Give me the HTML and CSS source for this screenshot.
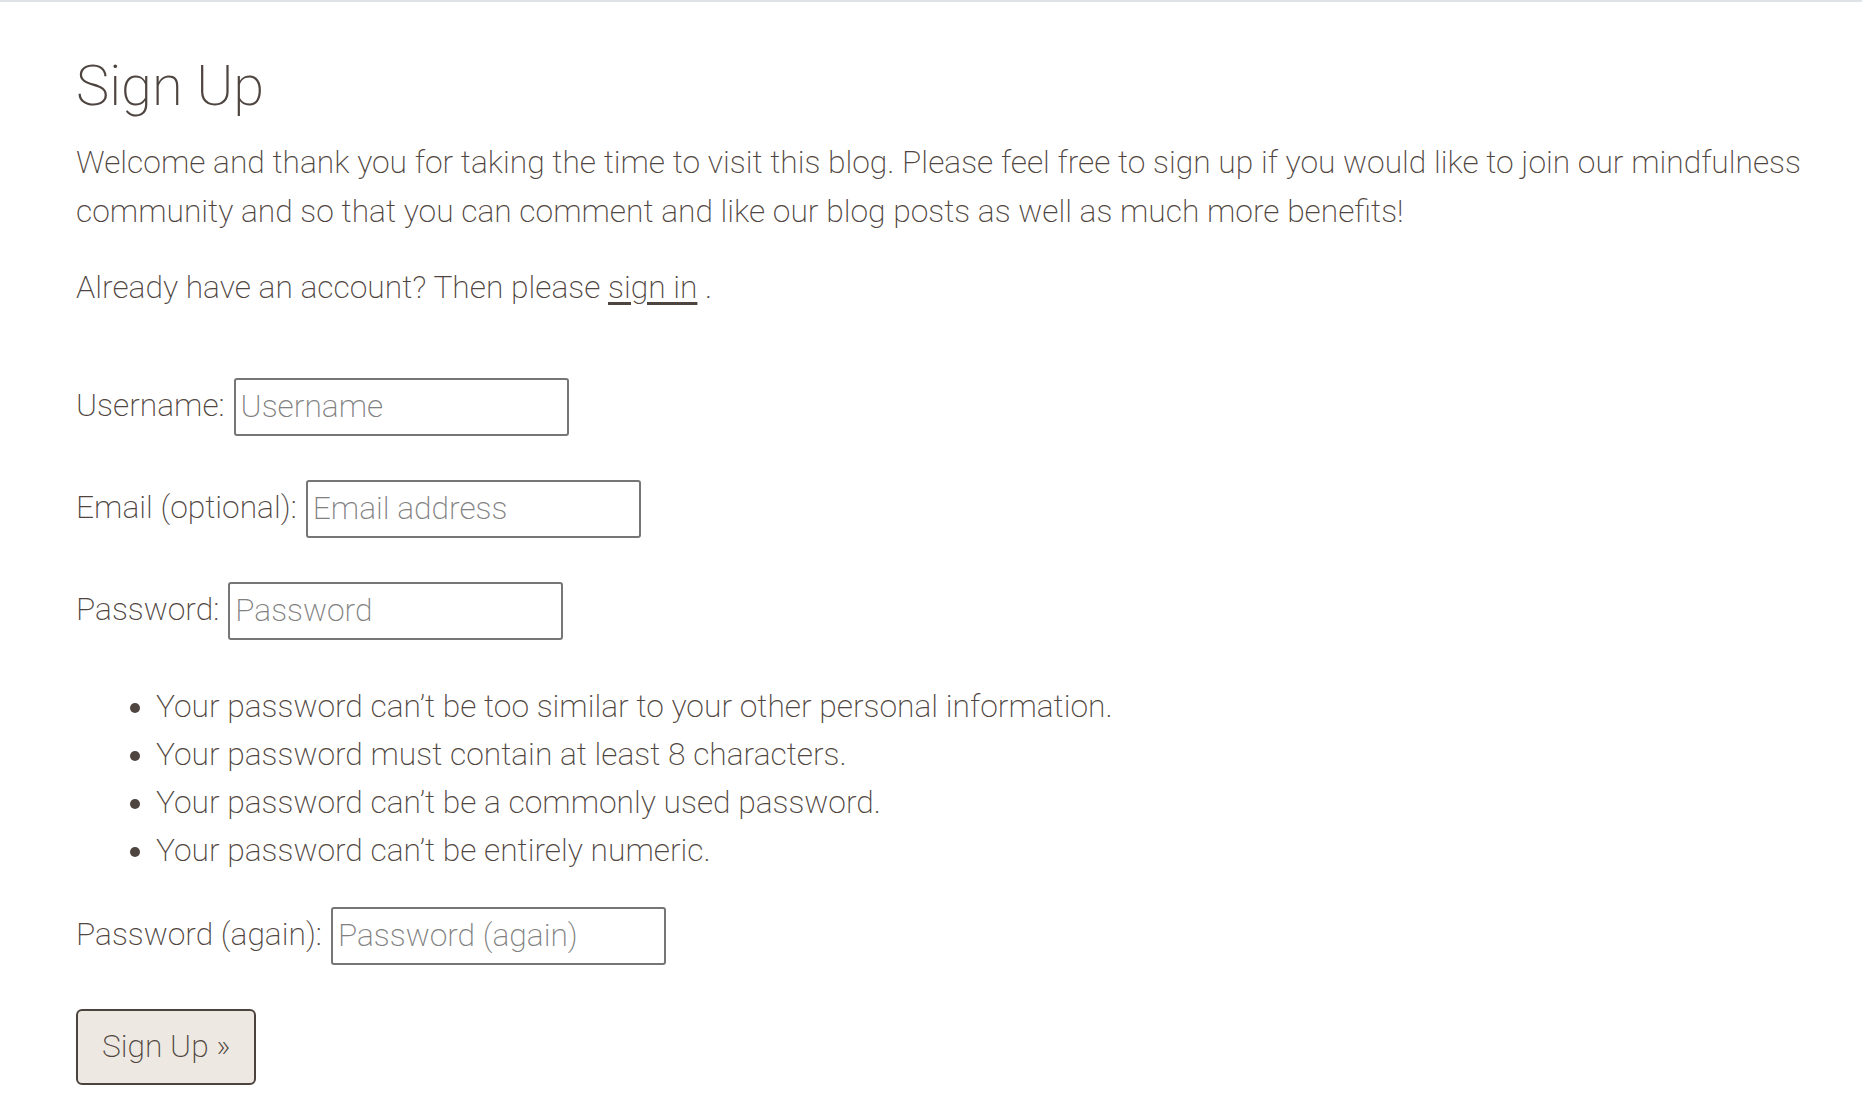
FILE: index.html
```html
<!DOCTYPE html>
<html lang="en">
<head>
<meta charset="utf-8">
<title>Sign Up</title>
<link rel="stylesheet" href="styles.css">
</head>
<body>
<div class="topline"></div>
<main class="page">
  <h1 class="title">Sign Up</h1>
  <p class="intro">Welcome and thank you for taking the time to visit this blog. Please feel free to sign up if you would like to join our mindfulness community and so that you can comment and like our blog posts as well as much more benefits!</p>
  <p class="intro">Already have an account? Then please <a class="link" href="#">sign in</a> .</p>
  <form class="signup-form">
    <div class="row">
      <label class="label" for="u">Username:</label>
      <input class="field" id="u" type="text" placeholder="Username">
    </div>
    <div class="row">
      <label class="label" for="e">Email (optional):</label>
      <input class="field" id="e" type="email" placeholder="Email address">
    </div>
    <div class="row">
      <label class="label" for="p1">Password:</label>
      <input class="field" id="p1" type="password" placeholder="Password">
    </div>
    <ul class="helptext">
      <li>Your password can’t be too similar to your other personal information.</li>
      <li>Your password must contain at least 8 characters.</li>
      <li>Your password can’t be a commonly used password.</li>
      <li>Your password can’t be entirely numeric.</li>
    </ul>
    <div class="row">
      <label class="label" for="p2">Password (again):</label>
      <input class="field" id="p2" type="password" placeholder="Password (again)">
    </div>
    <button class="btn" type="submit">Sign Up »</button>
  </form>
</main>
</body>
</html>
```
FILE: styles.css
```css
* { box-sizing: border-box; }
html, body {
  margin: 0;
  padding: 0;
  background: #ffffff;
}
body {
  font-family: Roboto, "Liberation Sans", sans-serif;
  font-weight: 200;
  font-size: 31.75px;
  line-height: 48.5px;
  color: #4f4540;
}
.topline {
  height: 2px;
  background: #dfe3e7;
}
.page {
  padding: 0 40px 0 76px;
}
.title {
  font-size: 56px;
  font-weight: 200;
  line-height: 67px;
  margin: 51px 0 19px;
}
.intro {
  margin: 0 0 28px;
}
.link {
  color: #4f4540;
  text-decoration: underline;
  text-underline-offset: 4px;
}
.signup-form {
  margin-top: 65px;
}
.row {
  display: flex;
  align-items: center;
  gap: 9px;
  height: 58px;
  margin-bottom: 44px;
}
.label {
  white-space: nowrap;
}
.field {
  width: 335px;
  height: 58px;
  border: 2px solid #767676;
  border-radius: 3px;
  padding: 0 5px;
  font-family: inherit;
  font-weight: 200;
  font-size: 31.75px;
  color: #4f4540;
  background: #fff;
}
.field::placeholder {
  color: #808080;
}
.helptext {
  margin: -1px 0 31px;
  padding-left: 80px;
  line-height: 48.3px;
}
.btn {
  font-family: inherit;
  font-weight: 200;
  font-size: 31.75px;
  line-height: 42px;
  color: #4f4540;
  background: #ede8e1;
  border: 2px solid #4d433e;
  border-radius: 6px;
  padding: 15px 24px;
  cursor: pointer;
}
```
